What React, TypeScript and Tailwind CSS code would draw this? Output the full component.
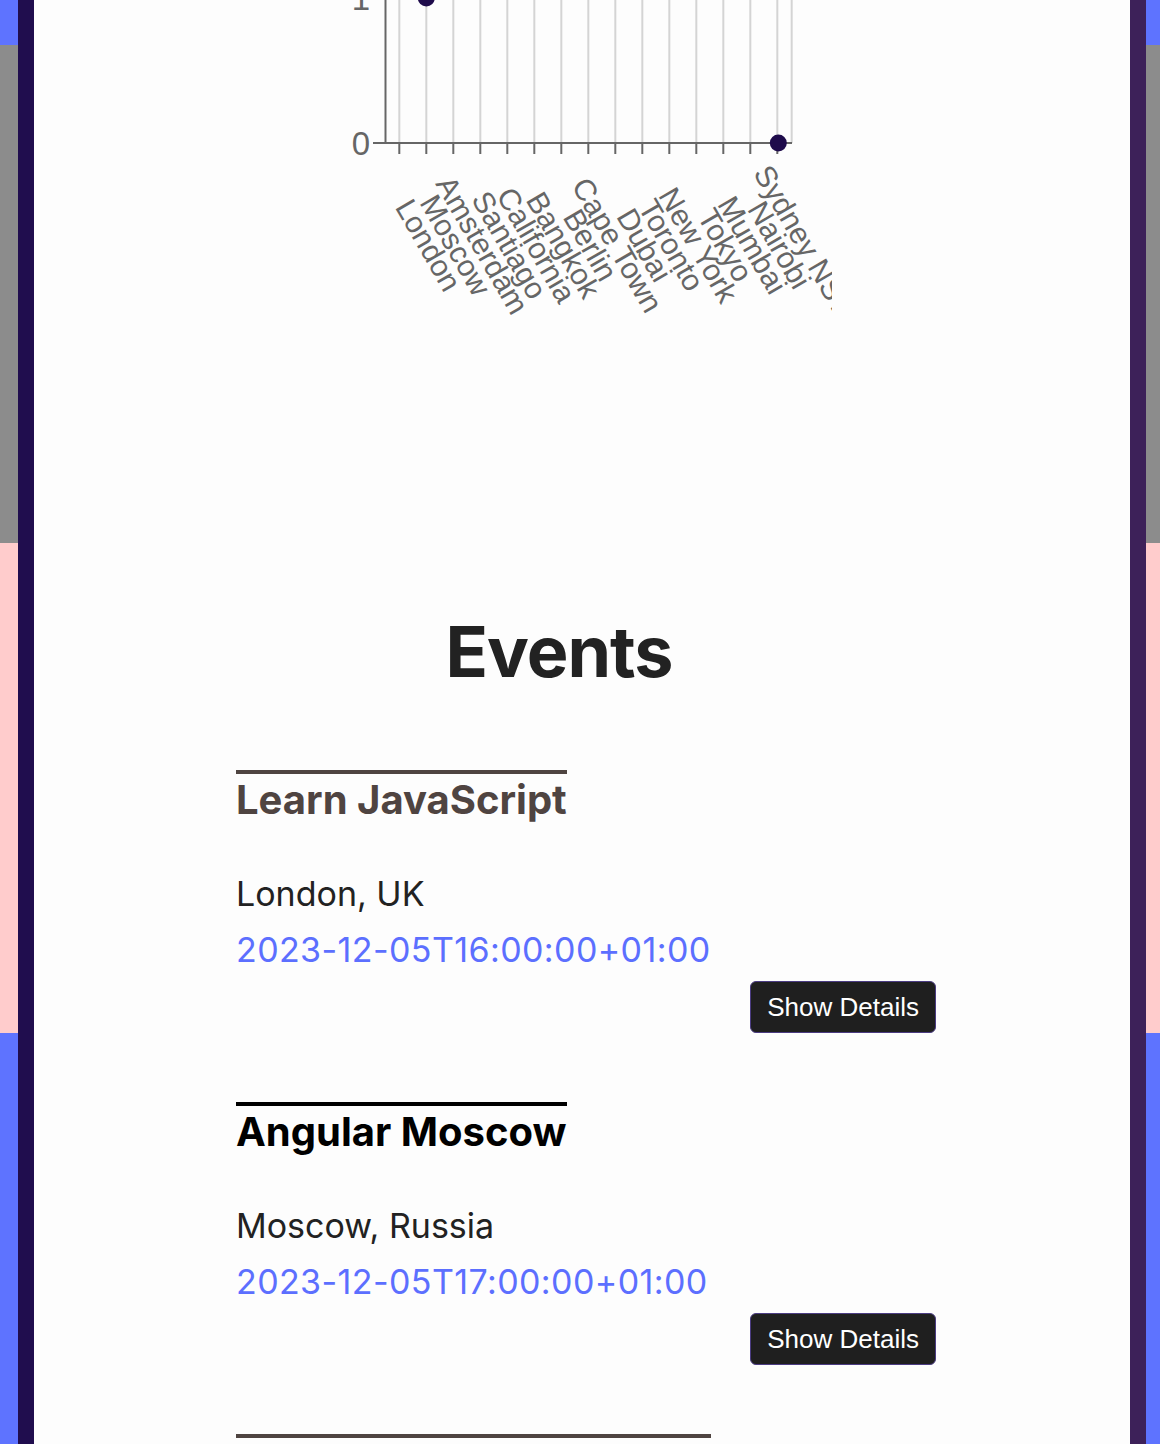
import React from "react";

// cities on the x axis (chart is cut at the top of the viewport)
const cities = [
  "London",
  "Moscow",
  "Amsterdam",
  "Santiago",
  "California",
  "Bangkok",
  "Berlin",
  "Cape Town",
  "Dubai",
  "Toronto",
  "New York",
  "Tokyo",
  "Mumbai",
  "Nairobi",
  "Sydney NSW",
];

const events = [
  {
    title: "Learn JavaScript",
    location: "London, UK",
    date: "2023-12-05T16:00:00+01:00",
    brown: true,
  },
  {
    title: "Angular Moscow",
    location: "Moscow, Russia",
    date: "2023-12-05T17:00:00+01:00",
    brown: false,
  },
  {
    title: "Vue.js Amsterdam 2024",
    location: "Amsterdam, Netherlands",
    date: "2023-12-05T18:00:00+01:00",
    brown: true,
  },
];

function CityChart() {
  const ticks = cities.map((_, i) => 399.3 + 27 * i);
  const grid = [...ticks, 791.7];

  return (
    <svg
      width="500"
      height="320"
      viewBox="332 0 500 320"
      className="mx-auto block"
      fontFamily="'Liberation Sans', Arial, sans-serif"
    >
      {/* grid */}
      {grid.map((x) => (
        <line key={x} x1={x} y1={-10} x2={x} y2={143} stroke="#d4d4d4" strokeWidth="2" />
      ))}

      {/* axes */}
      <line x1={385.5} y1={-10} x2={385.5} y2={144} stroke="#666" strokeWidth="2" />
      <line x1={373} y1={143} x2={792} y2={143} stroke="#666" strokeWidth="2" />
      <line x1={373} y1={-2} x2={386} y2={-2} stroke="#666" strokeWidth="2" />
      {ticks.map((x) => (
        <line key={x} x1={x} y1={143} x2={x} y2={154} stroke="#666" strokeWidth="2" />
      ))}

      {/* y labels */}
      <text x={370} y={9.8} textAnchor="end" fontSize="33" fill="#666">
        1
      </text>
      <text x={370} y={155.3} textAnchor="end" fontSize="33" fill="#666">
        0
      </text>

      {/* x labels */}
      {cities.map((c, i) => {
        const cx = 428.5 + 27 * i;
        return (
          <text
            key={c}
            x={cx}
            y={245}
            textAnchor="middle"
            dominantBaseline="central"
            fontSize="30"
            fill="#666"
            transform={`rotate(60 ${cx} 245)`}
          >
            {c}
          </text>
        );
      })}

      {/* points */}
      <circle cx={426.3} cy={-2} r={8.5} fill="#1e0b4b" />
      <circle cx={778.3} cy={143} r={8.5} fill="#1e0b4b" />
    </svg>
  );
}

function EventItem({ item }: { item: (typeof events)[number] }) {
  return (
    <div className="flex flex-col items-start">
      <h2
        className={
          item.brown
            ? "inline-block border-t-4 border-[#4f4441] text-[40px] font-bold leading-[52px] text-[#4f4441]"
            : "inline-block border-t-4 border-black text-[40px] font-bold leading-[52px] text-black"
        }
      >
        {item.title}
      </h2>
      <p className="mt-[44px] text-[34px] leading-[48px] text-[#222]">{item.location}</p>
      <p className="mt-[8px] text-[34px] leading-[48px] tracking-[0.4px] text-[#5c6fff]">{item.date}</p>
      <button className="mt-[7px] flex h-[52px] items-center self-end rounded-md border border-[#4b3c82] bg-[#1f1f1f] px-[16px] font-['Liberation_Sans',Arial,sans-serif] text-[26px] text-white">
        Show Details
      </button>
    </div>
  );
}

export default function App() {
  return (
    <div className="min-h-screen bg-[linear-gradient(to_bottom,#5e73ff_45px,#8c8c8c_45px,#8c8c8c_543px,#ffcccc_543px,#ffcccc_1033px,#5e73ff_1033px)] pl-[18px] pr-[14px]">
      <div className="min-h-[1700px] border-x-[16px] border-l-[#200d4e] border-r-[#3d2159] bg-[#fdfdfd] font-['Inter',sans-serif]">
        {/* Gráfico */}
        <CityChart />

        {/* Eventos */}
        <h1 className="mt-[292px] pr-[46px] text-center text-[70px] font-bold leading-[80px] tracking-[-1px] text-[#222]">
          Events
        </h1>

        <div className="ml-[202px] mt-[78px] flex w-[700px] flex-col gap-[69px] pb-20">
          {events.map((item) => (
            <EventItem key={item.title} item={item} />
          ))}
        </div>
      </div>
    </div>
  );
}
